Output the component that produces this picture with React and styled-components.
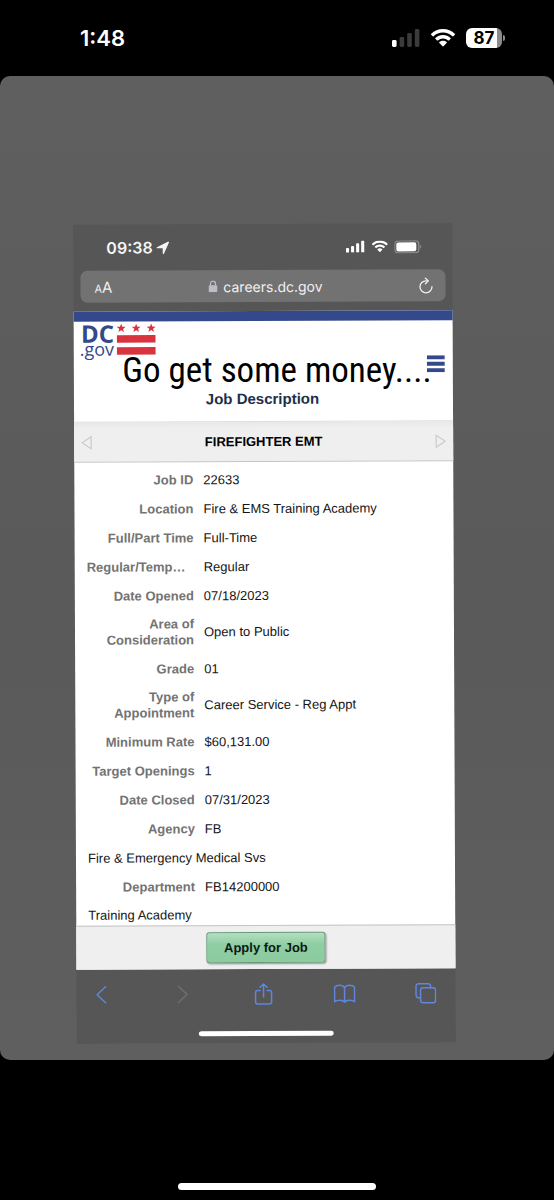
import React from 'react';
import styled, { createGlobalStyle } from 'styled-components';

const colors = {
  phone: '#565656',
  navy: '#34498c',
  red: '#d9333f',
  link: '#5f86dc',
  label: '#737373',
  bar: '#efefef',
  line: '#c4c4c4',
};

const GlobalStyle = createGlobalStyle`
  * {
    box-sizing: border-box;
  }

  body {
    margin: 0;
    background: #000;
    font-family: Inter, 'Liberation Sans', sans-serif;
  }

  button {
    padding: 0;
    border: 0;
    background: none;
    font: inherit;
    color: inherit;
    cursor: pointer;
  }

  svg {
    display: block;
  }
`;

const Screen = styled.main`
  display: flex;
  flex-direction: column;
  min-height: 100vh;
  background: #000;
`;

const StatusBar = styled.header`
  display: flex;
  align-items: center;
  justify-content: space-between;
  height: 76px;
  padding: 0 49px 0 80px;
  color: #fff;
`;

const Clock = styled.time`
  font-size: 22px;
  font-weight: 600;
`;

const StatusIcons = styled.div`
  display: flex;
  align-items: center;
  gap: ${(props) => props.$gap}px;
`;

const Battery = styled.span`
  display: flex;
  align-items: center;
  justify-content: center;
  width: 36px;
  height: 20px;
  border-radius: 6px;
  background: linear-gradient(to right, #fff 31px, #8b8b8b 31px);
  color: #000;
  font-size: 17px;
  font-weight: 700;
  line-height: 20px;
`;

const BatteryGroup = styled.span`
  display: flex;
  align-items: center;
  gap: 1px;

  &::after {
    content: '';
    width: 2px;
    height: 6px;
    border-radius: 0 2px 2px 0;
    background: #8b8b8b;
  }
`;

const Story = styled.section`
  position: relative;
  padding: 148px 100px 17px 75px;
  border-radius: 10px;
  background: linear-gradient(#5f5f5f, #5a5a5a 55%, #5f5f5f);
`;

const Caption = styled.p`
  position: absolute;
  top: 271px;
  left: 0;
  right: 0;
  margin: 0;
  color: #000;
  font-family: 'Roboto Condensed', Roboto, sans-serif;
  font-size: 35px;
  line-height: 48px;
  text-align: center;
  white-space: nowrap;
`;

// the shared photo sits slightly tilted in the story
const Phone = styled.article`
  background: ${colors.phone};
  transform: rotate(-0.25deg);
`;

const PhoneStatus = styled.div`
  display: flex;
  align-items: center;
  justify-content: space-between;
  height: 46px;
  padding: 0 30px 0 33px;
  color: #f4f4f4;
`;

const PhoneClock = styled.div`
  display: flex;
  align-items: center;
  gap: 4px;
  font-size: 16px;
  font-weight: 600;
`;

const AddressBar = styled.div`
  display: flex;
  align-items: center;
  justify-content: space-between;
  height: 32px;
  margin: 0 7px 9px;
  padding: 0 12px 0 14px;
  border-radius: 7px;
  background: #727272;
  color: #f0f0f0;
`;

const TextSize = styled.button`
  font-size: 11px;

  span {
    font-size: 15px;
  }
`;

const Address = styled.a`
  display: flex;
  align-items: center;
  gap: 6px;
  color: inherit;
  font-size: 14px;
  text-decoration: none;
`;

const Page = styled.div`
  border-top: 10px solid ${colors.navy};
  background: #fff;
  color: #151515;
  font-family: 'Liberation Sans', Arial, sans-serif;
`;

const PageHeader = styled.header`
  height: 100px;
  padding: 2px 8px 0 6px;
`;

const Brand = styled.div`
  display: flex;
  align-items: flex-end;
  justify-content: space-between;
  height: 50px;
`;

const Logo = styled.a`
  display: flex;
  align-self: flex-start;
  gap: 3px;
  color: ${colors.navy};
  font-family: 'Open Sans', sans-serif;
  text-decoration: none;
`;

const LogoText = styled.span`
  display: flex;
  flex-direction: column;
  align-items: flex-end;
  font-size: 18px;
  line-height: 12px;

  b {
    font-size: 24px;
    line-height: 19px;
  }
`;

const PageTitle = styled.h1`
  margin: 17px 0 0;
  color: #203048;
  font-size: 15px;
  line-height: 18px;
  text-align: center;
`;

const JobNav = styled.nav`
  display: flex;
  align-items: center;
  justify-content: space-between;
  height: 41px;
  padding: 0 7px;
  border-top: 1px solid #dedede;
  border-bottom: 1px solid ${colors.line};
  background: linear-gradient(#e8e8e8, ${colors.bar} 6px);

  h2 {
    margin: 0;
    color: #000;
    font-size: 13px;
  }
`;

const Details = styled.dl`
  margin: 0;
  padding: 3px 13px 0 12px;
  font-size: 13px;
  line-height: 16px;
`;

const Row = styled.div`
  display: grid;
  grid-template-columns: ${(props) => (props.$wide ? '1fr' : '107px 1fr')};
  align-items: center;
  gap: 10px;
  min-height: 29px;
  padding: 6px 0;

  &:last-child {
    min-height: 0;
    padding-bottom: 2px;
  }
`;

const Label = styled.dt`
  color: ${colors.label};
  font-weight: bold;
  text-align: ${(props) => (props.$left ? 'left' : 'right')};
`;

const Value = styled.dd`
  margin: 0;
`;

const ApplyBar = styled.footer`
  display: flex;
  justify-content: center;
  padding: 6px 0;
  border-top: 1px solid ${colors.line};
  background: ${colors.bar};
`;

const ApplyButton = styled.button`
  && {
    width: 119px;
    height: 31px;
    border: 1px solid #659b79;
    border-radius: 3px;
    background: linear-gradient(#b3dfc0, #8fcda3 40%, #8ccb9f);
    box-shadow: 1px 1px 2px rgba(0, 0, 0, 0.4);
    color: #0c1a12;
    font-size: 13px;
    font-weight: bold;
  }
`;

const Toolbar = styled.nav`
  display: flex;
  align-items: center;
  justify-content: space-between;
  height: 49px;
  padding: 0 19px 0 14px;
  color: ${colors.link};

  button:disabled {
    color: #6c6c6c;
  }
`;

const PhoneBottom = styled.div`
  padding: 13px 0 7px;
`;

const HomeIndicator = styled.div`
  width: ${(props) => props.$width};
  height: ${(props) => props.$height}px;
  margin: ${(props) => props.$margin};
  border-radius: 4px;
  background: #fff;
`;

const details = [
  { label: 'Job ID', value: '22633' },
  { label: 'Location', value: 'Fire & EMS Training Academy' },
  { label: 'Full/Part Time', value: 'Full-Time' },
  { label: 'Regular/Temp…', value: 'Regular', left: true },
  { label: 'Date Opened', value: '07/18/2023' },
  { label: 'Area of Consideration', value: 'Open to Public' },
  { label: 'Grade', value: '01' },
  { label: 'Type of Appointment', value: 'Career Service - Reg Appt' },
  { label: 'Minimum Rate', value: '$60,131.00' },
  { label: 'Target Openings', value: '1' },
  { label: 'Date Closed', value: '07/31/2023' },
  { label: 'Agency', value: 'FB' },
  { value: 'Fire & Emergency Medical Svs' },
  { label: 'Department', value: 'FB14200000' },
  { value: 'Training Academy' },
];

function Signal({ width, height, active }) {
  return (
    <svg width={width} height={height} viewBox="0 0 28 18" fill="#fff" aria-hidden="true">
      {[7, 10, 14, 18].map((h, i) => (
        <rect
          key={h}
          x={i * 7.6}
          y={18 - h}
          width="4.6"
          height={h}
          rx="1.4"
          fill={i < active ? '#fff' : '#3b3b3b'}
        />
      ))}
    </svg>
  );
}

function Wifi({ width, height }) {
  return (
    <svg width={width} height={height} viewBox="0 0 24 18" fill="#fff" aria-hidden="true">
      <path d="M12 0C7.4 0 3.2 1.8.2 4.8a.6.6 0 0 0 0 .9l1.5 1.5c.25.25.6.25.85 0A13.5 13.5 0 0 1 12 3.5c3.65 0 7 1.4 9.45 3.7.25.25.6.25.85 0l1.5-1.5a.6.6 0 0 0 0-.9C20.8 1.8 16.6 0 12 0Z" />
      <path d="M12 5.9c-2.9 0-5.6 1.1-7.6 3a.6.6 0 0 0 0 .9l1.6 1.6c.25.25.6.25.85 0A7.6 7.6 0 0 1 12 9.4c2 0 3.8.8 5.15 2 .25.25.6.25.85 0l1.6-1.6a.6.6 0 0 0 0-.9c-2-1.9-4.7-3-7.6-3Z" />
      <path d="M12 11.8c-1.4 0-2.6.5-3.6 1.3a.6.6 0 0 0 0 .9l3.2 3.3c.25.25.6.25.85 0l3.15-3.3a.6.6 0 0 0 0-.9c-1-.8-2.2-1.3-3.6-1.3Z" />
    </svg>
  );
}

function Arrow({ flipped }) {
  return (
    <svg
      width="11"
      height="14"
      viewBox="0 0 11 14"
      fill="none"
      stroke="#cdcdcd"
      strokeWidth="1.3"
      aria-hidden="true"
    >
      <path d={flipped ? 'M1 1 10 7 1 13Z' : 'M10 1 1 7l9 6Z'} />
    </svg>
  );
}

function Flag() {
  const star = 'M0-4.5 1.2-1.5 4.5-1.4 1.9.7 2.8 3.8 0 2-2.8 3.8-1.9.7-4.5-1.4-1.2-1.5Z';

  return (
    <svg width="39" height="32" viewBox="0 0 39 32" fill={colors.red} aria-hidden="true">
      <path d={star} transform="translate(4.5 4.6)" />
      <path d={star} transform="translate(19.5 4.6)" />
      <path d={star} transform="translate(34.5 4.6)" />
      <path d="M0 11.5h39v7.500H0zM0 23.500h39V31H0z" />
    </svg>
  );
}

function ToolIcon({ children }) {
  return (
    <svg
      width="22"
      height="22"
      viewBox="0 0 22 22"
      fill="none"
      stroke="currentColor"
      strokeWidth="1.5"
      strokeLinecap="round"
      strokeLinejoin="round"
      aria-hidden="true"
    >
      {children}
    </svg>
  );
}

function Safari() {
  return (
    <Phone>
      <PhoneStatus>
        <PhoneClock>
          <time>09:38</time>
          <svg width="13" height="13" viewBox="0 0 13 13" fill="currentColor" aria-hidden="true">
            <path d="M12.8.8 7.6 12.4c-.3.7-1.2.5-1.2-.3V6.9H.9C.1 6.9-.1 6 .6 5.7L12 .2c.6-.2 1 .1.8.6Z" />
          </svg>
        </PhoneClock>
        <StatusIcons $gap={6}>
          <Signal width={20} height={12} active={4} />
          <Wifi width={17} height={12} />
          <svg width="28" height="13" viewBox="0 0 28 13" aria-hidden="true">
            <rect x=".5" y=".5" width="24" height="12" rx="3.5" fill="none" stroke="#9a9a9a" />
            <rect x="2" y="2" width="20" height="9" rx="2" fill="#fff" />
            <path d="M26 4.5v4c1.3-.6 1.3-3.4 0-4Z" fill="#9a9a9a" />
          </svg>
        </StatusIcons>
      </PhoneStatus>
      <AddressBar>
        <TextSize type="button" aria-label="Text size">
          A<span>A</span>
        </TextSize>
        <Address href="#top">
          <svg width="9" height="12" viewBox="0 0 9 12" aria-hidden="true">
            <rect y="5" width="9" height="7" rx="1.3" fill="#bdbdc6" />
            <path d="M2 5.5V3.4a2.5 2.5 0 0 1 5 0v2.1" fill="none" stroke="#bdbdc6" strokeWidth="1.3" />
          </svg>
          careers.dc.gov
        </Address>
        <button type="button" aria-label="Reload">
          <svg
            width="15"
            height="17"
            viewBox="0 0 15 17"
            fill="none"
            stroke="currentColor"
            strokeWidth="1.3"
            strokeLinecap="round"
            strokeLinejoin="round"
            aria-hidden="true"
          >
            <path d="M13.5 9.5a6 6 0 1 1-6-6h2" />
            <path d="M6.8.8 9.8 3.6 6.9 6.5" />
          </svg>
        </button>
      </AddressBar>

      <Page>
        <PageHeader>
          <Brand>
            <Logo href="#home">
              <LogoText>
                <b>DC</b>
                .gov
              </LogoText>
              <Flag />
            </Logo>
            <button type="button" aria-label="Menu">
              <svg width="18" height="17" viewBox="0 0 18 17" fill={colors.navy} aria-hidden="true">
                <path d="M0 0h18v4H0zM0 6.5h18v4H0zM0 13h18v4H0z" />
              </svg>
            </button>
          </Brand>
          <PageTitle>Job Description</PageTitle>
        </PageHeader>
        <JobNav>
          <button type="button" aria-label="Previous job">
            <Arrow />
          </button>
          <h2>FIREFIGHTER EMT</h2>
          <button type="button" aria-label="Next job">
            <Arrow flipped />
          </button>
        </JobNav>
        <Details>
          {details.map((item) => (
            <Row key={item.value} $wide={!item.label}>
              {item.label && <Label $left={item.left}>{item.label}</Label>}
              <Value>{item.value}</Value>
            </Row>
          ))}
        </Details>
        <ApplyBar>
          <ApplyButton type="button">Apply for Job</ApplyButton>
        </ApplyBar>
      </Page>

      <Toolbar>
        <button type="button" aria-label="Back">
          <ToolIcon>
            <path d="M15 3 6.500 11 15 19" />
          </ToolIcon>
        </button>
        <button type="button" aria-label="Forward" disabled>
          <ToolIcon>
            <path d="M7 3l8.500 8L7 19" />
          </ToolIcon>
        </button>
        <button type="button" aria-label="Share">
          <ToolIcon>
            <path d="M7.5 7.5H5a2 2 0 0 0-2 2V19a2 2 0 0 0 2 2h12a2 2 0 0 0 2-2V9.5a2 2 0 0 0-2-2h-2.5M11 14V1M7.5 4.3 11 1l3.5 3.3" />
          </ToolIcon>
        </button>
        <button type="button" aria-label="Bookmarks">
          <ToolIcon>
            <path d="M11 5C10 3 8 2.5 6 2.5S2 3.3 1 4.5V19c1.2-1 3-1.5 5-1.5s4 .6 5 2c1-1.4 3-2 5-2s3.8.5 5 1.5V4.5c-1-1.2-3-2-5-2S12 3 11 5Zm0 0v14.5" />
          </ToolIcon>
        </button>
        <button type="button" aria-label="Tabs">
          <ToolIcon>
            <path d="M6 15.500H4A2.500 2.500 0 0 1 1.500 13V4A2.500 2.500 0 0 1 4 1.500h9.500A2.500 2.500 0 0 1 16 4v1.500" />
            <rect x="6" y="5.5" width="15" height="15" rx="2.5" />
          </ToolIcon>
        </button>
      </Toolbar>
      <PhoneBottom>
        <HomeIndicator $width="135px" $height={5} $margin="0 auto" />
      </PhoneBottom>
    </Phone>
  );
}

function App() {
  return (
    <>
      <GlobalStyle />
      <Screen>
        <StatusBar>
          <Clock>1:48</Clock>
          <StatusIcons $gap={11}>
            <Signal width={28} height={18} active={1} />
            <Wifi width={24} height={18} />
            <BatteryGroup>
              <Battery>87</Battery>
            </BatteryGroup>
          </StatusIcons>
        </StatusBar>
        <Story>
          <Safari />
          <Caption>Go get some money....</Caption>
        </Story>
        <HomeIndicator $width="198px" $height={7} $margin="auto auto 10px" />
      </Screen>
    </>
  );
}

export default App;
